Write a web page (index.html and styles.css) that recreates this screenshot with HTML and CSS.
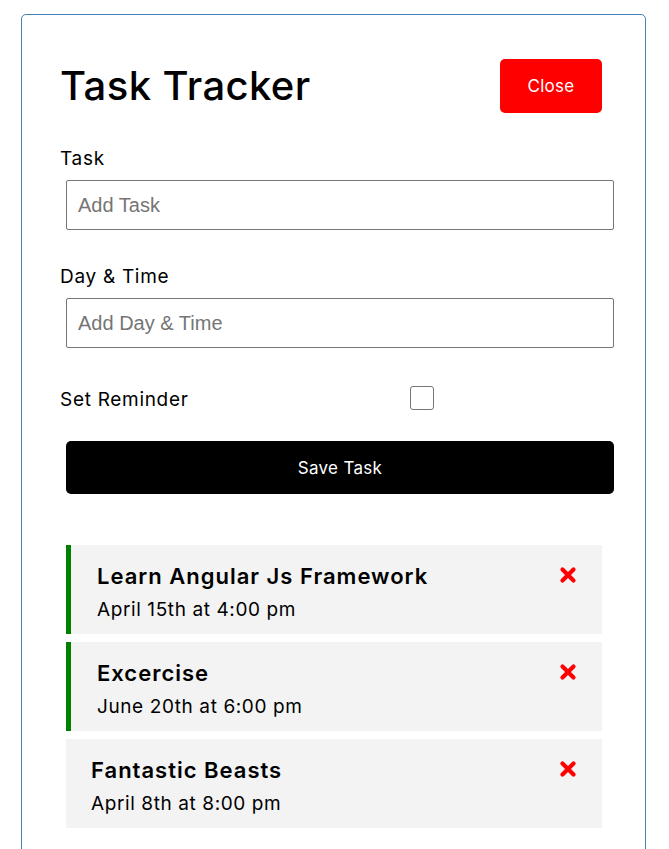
FILE: index.html
```html
<!DOCTYPE html>
<html>
<head>
<meta charset="utf-8">
<link rel="stylesheet" href="styles.css">
</head>
<body>
<div class="container">
  <header class="header">
    <h1 class="title">Task Tracker</h1>
    <button class="btn btn-close">Close</button>
  </header>
  <form class="add-form">
    <div class="form-control">
      <label class="label">Task</label>
      <input class="input" type="text" placeholder="Add Task">
    </div>
    <div class="form-control form-control-2">
      <label class="label">Day &amp; Time</label>
      <input class="input" type="text" placeholder="Add Day &amp; Time">
    </div>
    <div class="form-check">
      <label class="label check-label">Set Reminder</label>
      <span class="checkbox"></span>
      <span class="check-spacer"></span>
    </div>
    <button type="button" class="btn btn-block">Save Task</button>
  </form>
  <div class="tasks">
    <div class="task reminder">
      <div class="task-head">
        <h3 class="task-title">Learn Angular Js Framework</h3>
        <svg class="x-icon" viewBox="0 0 18 18" width="18" height="18"><path d="M3.5 3.5 L14.5 14.5 M14.5 3.5 L3.5 14.5" stroke="#ff0000" stroke-width="4.2" stroke-linecap="round" fill="none"/></svg>
      </div>
      <p class="task-date">April 15th at 4:00 pm</p>
    </div>
    <div class="task reminder">
      <div class="task-head">
        <h3 class="task-title">Excercise</h3>
        <svg class="x-icon" viewBox="0 0 18 18" width="18" height="18"><path d="M3.5 3.5 L14.5 14.5 M14.5 3.5 L3.5 14.5" stroke="#ff0000" stroke-width="4.2" stroke-linecap="round" fill="none"/></svg>
      </div>
      <p class="task-date">June 20th at 6:00 pm</p>
    </div>
    <div class="task">
      <div class="task-head">
        <h3 class="task-title">Fantastic Beasts</h3>
        <svg class="x-icon" viewBox="0 0 18 18" width="18" height="18"><path d="M3.5 3.5 L14.5 14.5 M14.5 3.5 L3.5 14.5" stroke="#ff0000" stroke-width="4.2" stroke-linecap="round" fill="none"/></svg>
      </div>
      <p class="task-date">April 8th at 8:00 pm</p>
    </div>
  </div>
</div>
</body>
</html>
```
FILE: styles.css
```css
* { box-sizing: border-box; }
html, body { margin: 0; padding: 0; background: #fff; }
body { font-family: Inter, "Open Sans", sans-serif; color: #000; }

.container {
  width: 625px;
  margin: 14px 0 0 21px;
  border: 1px solid #4682b4;
  border-radius: 5px;
  padding: 39px 38px 40px 38px;
  min-height: 900px;
}

.header {
  display: flex;
  justify-content: space-between;
  align-items: center;
  margin-bottom: 24px;
}
.title {
  margin: 0;
  font-size: 40px;
  font-weight: 500;
  line-height: 48px;
  letter-spacing: 0.4px;
}
.btn {
  font-family: Inter, "Open Sans", sans-serif;
  border: none;
  border-radius: 5px;
  color: #fff;
  background: #000;
  font-size: 17px;
  letter-spacing: 0.3px;
  cursor: pointer;
}
.btn-close {
  background: #ff0000;
  width: 102px;
  height: 54px;
  margin: 5px;
}

.label {
  display: block;
  font-size: 19px;
  line-height: 27px;
  letter-spacing: 0.7px;
  padding-top: 3px;
}
.form-control .input {
  display: block;
  margin: 8px 0 0 6px;
  width: 548px;
  height: 50px;
  border: 1px solid #767676;
  border-radius: 2px;
  padding: 0 11px;
  font-family: "Liberation Sans", Arial, sans-serif;
  font-size: 20px;
  color: #000;
}
.input::placeholder { color: #757575; }
.form-control-2 { margin-top: 30px; }

.form-check {
  display: flex;
  align-items: center;
  margin-top: 34px;
  height: 28px;
}
.check-label { width: 350px; padding-top: 6px; }
.checkbox {
  width: 24px;
  height: 24px;
  border: 1px solid #767676;
  border-radius: 3px;
  margin-top: 3px;
}
.check-spacer { flex: 1; }

.btn-block {
  display: block;
  width: 548px;
  height: 53px;
  margin: 31px 0 0 6px;
}

.tasks { margin-top: 51px; }
.task {
  background: #f3f3f3;
  margin: 0 5px 8px 6px;
  padding: 17px 25px 0 25px;
  height: 89px;
}
.task.reminder {
  border-left: 5px solid #008000;
  padding-left: 26px;
}
.task-head {
  display: flex;
  justify-content: space-between;
  align-items: center;
}
.task-title {
  margin: 0;
  font-size: 22px;
  font-weight: 600;
  line-height: 29px;
  letter-spacing: 1px;
}
.x-icon { display: block; margin-top: -4px; }
.task-date {
  margin: 5px 0 0 0;
  font-size: 19px;
  line-height: 27px;
  letter-spacing: 0.6px;
}
```
